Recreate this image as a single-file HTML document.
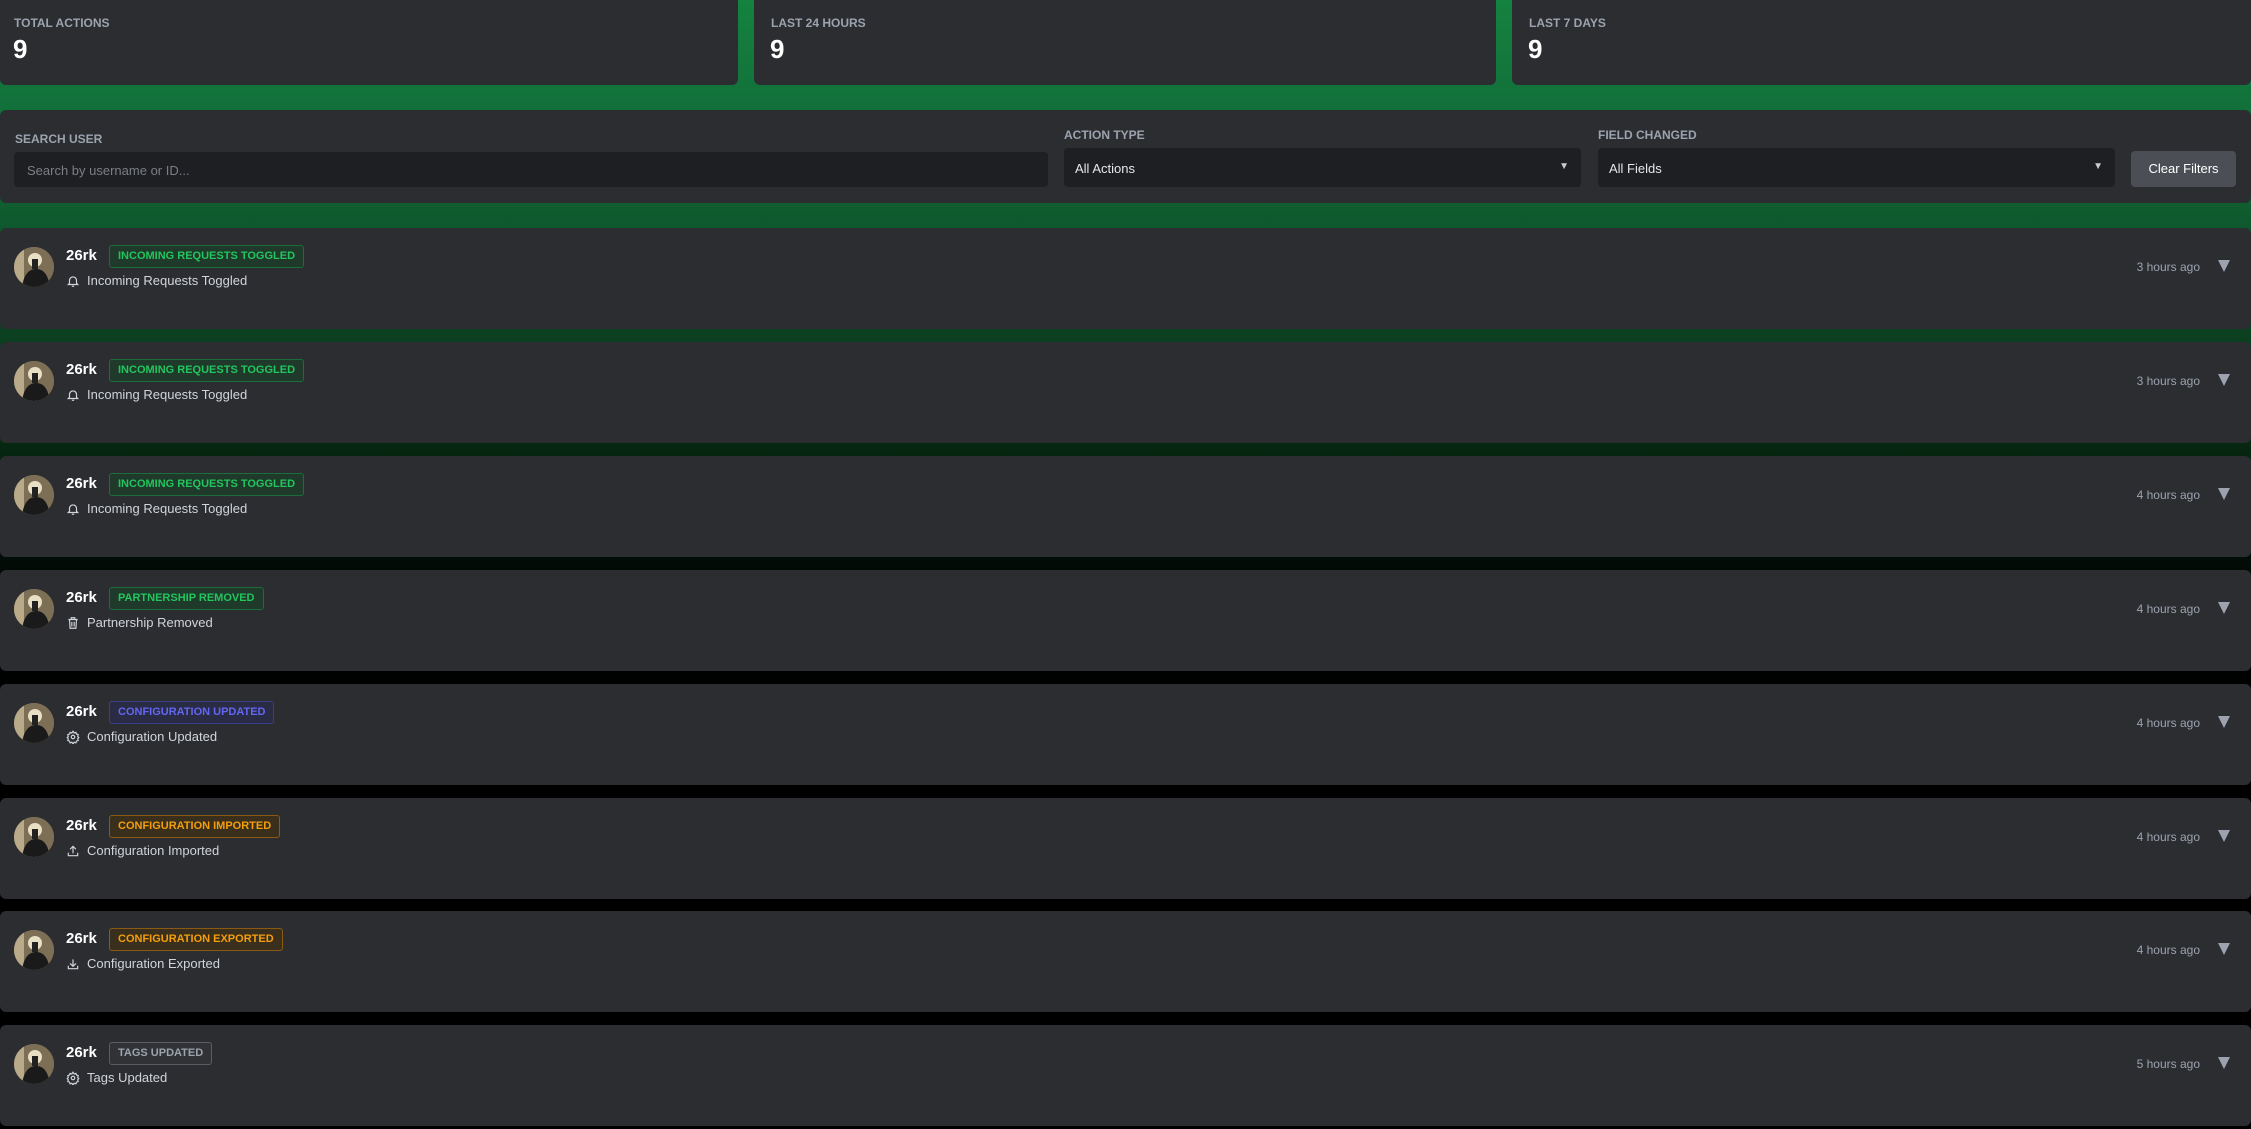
<!DOCTYPE html>
<html><head><meta charset="utf-8"><style>
*{box-sizing:border-box;margin:0;padding:0}
body{width:2251px;height:1129px;overflow:hidden;font-family:"Liberation Sans",Arial,sans-serif;
background:linear-gradient(180deg,#15823f 0px,#12703a 110px,#0f5a2e 220px,#0b3f20 340px,#06240f 460px,#020805 580px,#000 700px,#000 1129px);position:relative}
.card{position:absolute;background:#2b2d31;border-radius:6px}
.lab{font-size:12px;font-weight:bold;color:#9ca3af;position:absolute}
.num{font-size:26px;font-weight:bold;color:#fff;position:absolute}
.field{position:absolute;background:#1e1f23;border-radius:4px;font-size:13px}
.arr{position:absolute;right:12px;top:13px;color:#ccc;font-size:10px}
.row{position:absolute;left:0;width:2251px;height:101px;background:#2b2d31;border-radius:6px}
.av{position:absolute;left:14px;top:19px;width:40px;height:40px;border-radius:50%;overflow:hidden;background:#8a7a5c}
.un{position:absolute;left:66px;top:19px;font-size:15px;font-weight:bold;color:#fff}
.badge{position:absolute;left:109px;top:17px;height:23px;padding:0 8px;line-height:21px;font-size:11px;font-weight:bold;border:1px solid;border-radius:3px}
.g{color:#22c55e;border-color:#1e6b3b;background:#1f3a2a}
.b{color:#6366f1;border-color:#3b3f86;background:#2a2c45}
.o{color:#f59e0b;border-color:#8a5a12;background:#3a2f1c}
.t{color:#9ca3af;border-color:#5a5d63;background:#303236}
.sub{position:absolute;left:66px;top:45px;font-size:13px;color:#d1d5db;display:flex;align-items:center;gap:7px}
.sub svg{width:14px;height:14px}
.time{position:absolute;right:51px;top:32px;font-size:12px;color:#9ca3af}
.tri{position:absolute;right:21px;top:32px;width:0;height:0;border-left:6px solid transparent;border-right:6px solid transparent;border-top:12px solid #9ca3af}
</style></head><body>
<div class="card" style="left:0;top:-6px;width:738px;height:91px"><div class="lab" style="left:14px;top:22px">TOTAL ACTIONS</div><div class="num" style="left:13px;top:40px">9</div></div>
<div class="card" style="left:754px;top:-6px;width:742px;height:91px"><div class="lab" style="left:17px;top:22px">LAST 24 HOURS</div><div class="num" style="left:16px;top:40px">9</div></div>
<div class="card" style="left:1512px;top:-6px;width:739px;height:91px"><div class="lab" style="left:17px;top:22px">LAST 7 DAYS</div><div class="num" style="left:16px;top:40px">9</div></div>

<div class="card" style="left:0;top:110px;width:2251px;height:93px">
<div class="lab" style="left:15px;top:22px">SEARCH USER</div>
<div class="field" style="left:14px;top:42px;width:1034px;height:35px;color:#7b7e85;padding:11px 13px">Search by username or ID...</div>
<div class="lab" style="left:1064px;top:18px">ACTION TYPE</div>
<div class="field" style="left:1064px;top:38px;width:517px;height:39px;color:#e5e7eb;padding:13px 11px">All Actions<span class="arr">▼</span></div>
<div class="lab" style="left:1598px;top:18px">FIELD CHANGED</div>
<div class="field" style="left:1598px;top:38px;width:517px;height:39px;color:#e5e7eb;padding:13px 11px">All Fields<span class="arr">▼</span></div>
<div style="position:absolute;left:2131px;top:41px;width:105px;height:36px;background:#4b4e55;border-radius:4px;color:#fff;font-size:13px;text-align:center;line-height:36px">Clear Filters</div>
</div>

<div class="row" style="top:228px"><div class="av"><svg width="40" height="40" viewBox="0 0 40 40"><rect width="40" height="40" fill="#7d6f55"/><rect width="10" height="40" fill="#b9ab8a"/><path d="M8 40C10 26 16 22 22 22C30 22 34 28 36 40Z" fill="#1a1a1a"/><circle cx="21" cy="13" r="7" fill="#e9dfc4"/><rect x="18" y="12" width="6" height="10" fill="#222"/></svg></div><div class="un">26rk</div><div class="badge g">INCOMING REQUESTS TOGGLED</div><div class="sub"><svg viewBox="0 0 24 24" fill="none" stroke="#d1d5db" stroke-width="2"><path d="M6 16V11a6 6 0 0112 0v5l2 2H4z"/><path d="M10 21h4"/></svg><span>Incoming Requests Toggled</span></div><div class="time">3 hours ago</div><div class="tri"></div></div>

<div class="row" style="top:342px"><div class="av"><svg width="40" height="40" viewBox="0 0 40 40"><rect width="40" height="40" fill="#7d6f55"/><rect width="10" height="40" fill="#b9ab8a"/><path d="M8 40C10 26 16 22 22 22C30 22 34 28 36 40Z" fill="#1a1a1a"/><circle cx="21" cy="13" r="7" fill="#e9dfc4"/><rect x="18" y="12" width="6" height="10" fill="#222"/></svg></div><div class="un">26rk</div><div class="badge g">INCOMING REQUESTS TOGGLED</div><div class="sub"><svg viewBox="0 0 24 24" fill="none" stroke="#d1d5db" stroke-width="2"><path d="M6 16V11a6 6 0 0112 0v5l2 2H4z"/><path d="M10 21h4"/></svg><span>Incoming Requests Toggled</span></div><div class="time">3 hours ago</div><div class="tri"></div></div>

<div class="row" style="top:456px"><div class="av"><svg width="40" height="40" viewBox="0 0 40 40"><rect width="40" height="40" fill="#7d6f55"/><rect width="10" height="40" fill="#b9ab8a"/><path d="M8 40C10 26 16 22 22 22C30 22 34 28 36 40Z" fill="#1a1a1a"/><circle cx="21" cy="13" r="7" fill="#e9dfc4"/><rect x="18" y="12" width="6" height="10" fill="#222"/></svg></div><div class="un">26rk</div><div class="badge g">INCOMING REQUESTS TOGGLED</div><div class="sub"><svg viewBox="0 0 24 24" fill="none" stroke="#d1d5db" stroke-width="2"><path d="M6 16V11a6 6 0 0112 0v5l2 2H4z"/><path d="M10 21h4"/></svg><span>Incoming Requests Toggled</span></div><div class="time">4 hours ago</div><div class="tri"></div></div>

<div class="row" style="top:570px"><div class="av"><svg width="40" height="40" viewBox="0 0 40 40"><rect width="40" height="40" fill="#7d6f55"/><rect width="10" height="40" fill="#b9ab8a"/><path d="M8 40C10 26 16 22 22 22C30 22 34 28 36 40Z" fill="#1a1a1a"/><circle cx="21" cy="13" r="7" fill="#e9dfc4"/><rect x="18" y="12" width="6" height="10" fill="#222"/></svg></div><div class="un">26rk</div><div class="badge g">PARTNERSHIP REMOVED</div><div class="sub"><svg viewBox="0 0 24 24" fill="none" stroke="#d1d5db" stroke-width="2"><path d="M4 6h16M9 6V3h6v3M6 6l1 15h10l1-15M10 10v8M14 10v8"/></svg><span>Partnership Removed</span></div><div class="time">4 hours ago</div><div class="tri"></div></div>

<div class="row" style="top:684px"><div class="av"><svg width="40" height="40" viewBox="0 0 40 40"><rect width="40" height="40" fill="#7d6f55"/><rect width="10" height="40" fill="#b9ab8a"/><path d="M8 40C10 26 16 22 22 22C30 22 34 28 36 40Z" fill="#1a1a1a"/><circle cx="21" cy="13" r="7" fill="#e9dfc4"/><rect x="18" y="12" width="6" height="10" fill="#222"/></svg></div><div class="un">26rk</div><div class="badge b">CONFIGURATION UPDATED</div><div class="sub"><svg viewBox="0 0 24 24" fill="none" stroke="#d1d5db" stroke-width="2"><circle cx="12" cy="12" r="3"/><path d="M12 2l2 3 3-1 1 3 3 1-1 3 2 2-2 2 1 3-3 1-1 3-3-1-2 3-2-3-3 1-1-3-3-1 1-3-2-2 2-2-1-3 3-1 1-3 3 1z"/></svg><span>Configuration Updated</span></div><div class="time">4 hours ago</div><div class="tri"></div></div>

<div class="row" style="top:798px"><div class="av"><svg width="40" height="40" viewBox="0 0 40 40"><rect width="40" height="40" fill="#7d6f55"/><rect width="10" height="40" fill="#b9ab8a"/><path d="M8 40C10 26 16 22 22 22C30 22 34 28 36 40Z" fill="#1a1a1a"/><circle cx="21" cy="13" r="7" fill="#e9dfc4"/><rect x="18" y="12" width="6" height="10" fill="#222"/></svg></div><div class="un">26rk</div><div class="badge o">CONFIGURATION IMPORTED</div><div class="sub"><svg viewBox="0 0 24 24" fill="none" stroke="#d1d5db" stroke-width="2"><path d="M4 15v5h16v-5M12 16V4M7 9l5-5 5 5"/></svg><span>Configuration Imported</span></div><div class="time">4 hours ago</div><div class="tri"></div></div>

<div class="row" style="top:911px"><div class="av"><svg width="40" height="40" viewBox="0 0 40 40"><rect width="40" height="40" fill="#7d6f55"/><rect width="10" height="40" fill="#b9ab8a"/><path d="M8 40C10 26 16 22 22 22C30 22 34 28 36 40Z" fill="#1a1a1a"/><circle cx="21" cy="13" r="7" fill="#e9dfc4"/><rect x="18" y="12" width="6" height="10" fill="#222"/></svg></div><div class="un">26rk</div><div class="badge o">CONFIGURATION EXPORTED</div><div class="sub"><svg viewBox="0 0 24 24" fill="none" stroke="#d1d5db" stroke-width="2"><path d="M4 15v5h16v-5M12 4v12M7 11l5 5 5-5"/></svg><span>Configuration Exported</span></div><div class="time">4 hours ago</div><div class="tri"></div></div>

<div class="row" style="top:1025px"><div class="av"><svg width="40" height="40" viewBox="0 0 40 40"><rect width="40" height="40" fill="#7d6f55"/><rect width="10" height="40" fill="#b9ab8a"/><path d="M8 40C10 26 16 22 22 22C30 22 34 28 36 40Z" fill="#1a1a1a"/><circle cx="21" cy="13" r="7" fill="#e9dfc4"/><rect x="18" y="12" width="6" height="10" fill="#222"/></svg></div><div class="un">26rk</div><div class="badge t">TAGS UPDATED</div><div class="sub"><svg viewBox="0 0 24 24" fill="none" stroke="#d1d5db" stroke-width="2"><circle cx="12" cy="12" r="3"/><path d="M12 2l2 3 3-1 1 3 3 1-1 3 2 2-2 2 1 3-3 1-1 3-3-1-2 3-2-3-3 1-1-3-3-1 1-3-2-2 2-2-1-3 3-1 1-3 3 1z"/></svg><span>Tags Updated</span></div><div class="time">5 hours ago</div><div class="tri"></div></div>
</body></html>
